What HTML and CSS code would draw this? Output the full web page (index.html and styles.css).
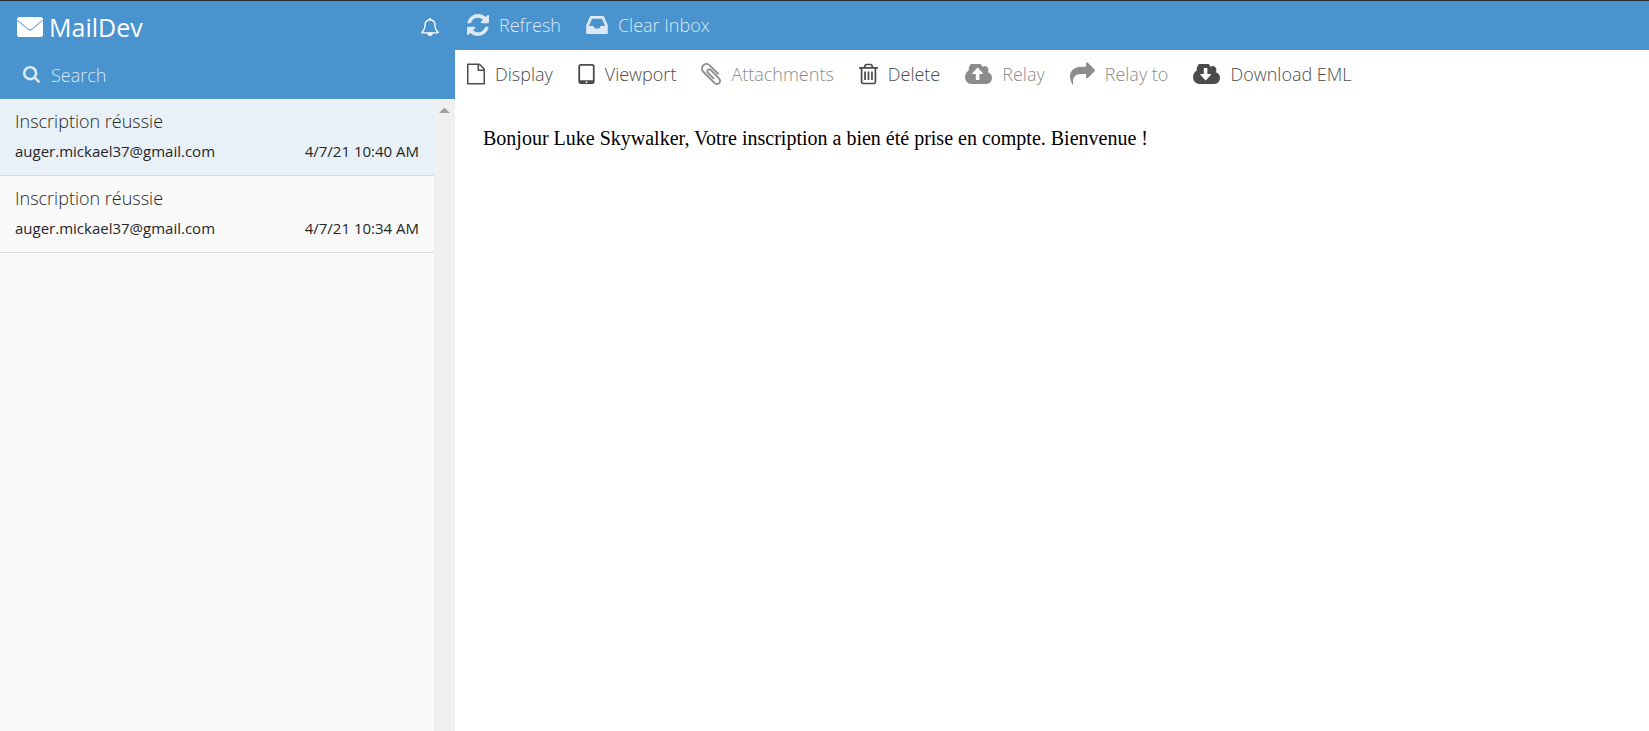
FILE: index.html
```html
<!DOCTYPE html>
<html lang="en">
<head>
<meta charset="utf-8">
<title>MailDev</title>
<link rel="stylesheet" href="styles.css">
</head>
<body>
<div class="app">
  <aside class="sidebar">
    <header class="brand-area">
      <div class="brand-row">
        <h1 class="brand">
          <svg class="icon-envelope" viewBox="0 0 26 20" aria-hidden="true"><rect width="26" height="20" rx="2.5" fill="currentColor"/><path class="envelope-fold" d="M.3 3.2 11 12.2Q13 13.8 15 12.2L25.7 3.2"/></svg>
          <span>MailDev</span>
        </h1>
        <button class="bell" type="button" aria-label="Notifications">
          <svg class="icon-bell" viewBox="64 0 1664 1792" preserveAspectRatio="none" aria-hidden="true"><path d="M246 1408h1300q-266-300-266-832 0-51-24-105t-69-103-121.500-80.500-169.500-31.500-169.500 31.500-121.500 80.500-69 103-24 105q0 532-266 832zm1482 0q0 52-38 90t-90 38h-448q0 106-75 181t-181 75-181-75-75-181h-448q-52 0-90-38t-38-90q50-42 91-88t85-119.500 74.500-158.500 50-206 19.500-260q0-152 117-282.500t307-158.500q-8-19-8-39 0-40 28-68t68-28 68 28 28 68q0 20-8 39 190 28 307 158.500t117 282.500q0 139 19.500 260t50 206 74.500 158.500 85 119.500 91 88z"/></svg>
        </button>
      </div>
      <label class="search">
        <svg class="icon-search" viewBox="64 128 1664 1664" aria-hidden="true"><path d="M1216 832q0-185-131.500-316.500t-316.500-131.500-316.500 131.500-131.500 316.500 131.500 316.500 316.500 131.500 316.500-131.500 131.500-316.500zm512 832q0 52-38 90t-90 38q-54 0-90-38l-343-342q-179 124-399 124-143 0-273.500-55.500t-225-150-150-225-55.500-273.500 55.500-273.500 150-225 225-150 273.500-55.500 273.500 55.500 225 150 150 225 55.500 273.500q0 220-124 399l343 343q37 37 37 90z"/></svg>
        <input class="search-input" type="text" placeholder="Search" aria-label="Search">
      </label>
    </header>
    <div class="mail-pane">
      <ul class="mail-list">
        <li class="mail mail-current">
          <a class="mail-link" href="#mail-2">
            <span class="mail-subject">Inscription réussie</span>
            <span class="mail-meta"><span>auger.mickael37@gmail.com</span><span>4/7/21 10:40 AM</span></span>
          </a>
        </li>
        <li class="mail">
          <a class="mail-link" href="#mail-1">
            <span class="mail-subject">Inscription réussie</span>
            <span class="mail-meta"><span>auger.mickael37@gmail.com</span><span>4/7/21 10:34 AM</span></span>
          </a>
        </li>
      </ul>
      <div class="scroll-track" aria-hidden="true"><span class="scroll-arrow"></span></div>
    </div>
  </aside>
  <main class="content">
    <nav class="bar bar-main">
      <button class="tool" type="button">
        <svg class="icon-refresh" viewBox="128 128 1536 1536" aria-hidden="true"><path d="M1639 1056q0 5-1 7-64 268-268 434.500t-478 166.500q-146 0-282.500-55t-243.500-157l-129 129q-19 19-45 19t-45-19-19-45v-448q0-26 19-45t45-19h448q26 0 45 19t19 45-19 45l-137 137q71 66 161 102t187 36q134 0 250-65t186-179q11-17 53-117 8-23 30-23h192q13 0 22.500 9.500t9.500 22.500zm25-800v448q0 26-19 45t-45 19h-448q-26 0-45-19t-19-45 19-45l138-138q-148-137-349-137-134 0-250 65t-186 179q-11 17-53 117-8 23-30 23h-199q-13 0-22.500-9.500t-9.500-22.500v-7q65-268 270-434.500t480-166.500q146 0 284 55.500t245 156.500l130-129q19-19 45-19t45 19 19 45z"/></svg>
        <span>Refresh</span>
      </button>
      <button class="tool" type="button">
        <svg class="icon-inbox" viewBox="128 256 1536 1280" aria-hidden="true"><path d="M1151 960h316q-1-3-2.500-8t-2.500-8l-212-496h-708l-212 496q-1 2-2.500 8t-2.500 8h316l95 192h320zm513 30v482q0 26-19 45t-45 19h-1408q-26 0-45-19t-19-45v-482q0-62 25-123l238-552q10-25 36.500-42t52.500-17h832q26 0 52.500 17t36.500 42l238 552q25 61 25 123z"/></svg>
        <span>Clear Inbox</span>
      </button>
    </nav>
    <nav class="bar bar-mail">
      <button class="tool" type="button">
        <svg class="icon-file" viewBox="128 0 1536 1792" aria-hidden="true"><path d="M1596 380q28 28 48 76t20 88v1152q0 40-28 68t-68 28h-1344q-40 0-68-28t-28-68v-1600q0-40 28-68t68-28h896q40 0 88 20t76 48zm-444-244v376h376q-10-29-22-41l-313-313q-12-12-41-22zm384 1528v-1024h-416q-40 0-68-28t-28-68v-416h-768v1536h1280z"/></svg>
        <span>Display</span>
      </button>
      <button class="tool" type="button">
        <svg class="icon-tablet" viewBox="320 128 1152 1408" aria-hidden="true"><path d="M960 1408q0-26-19-45t-45-19-45 19-19 45 19 45 45 19 45-19 19-45zm384-160v-960q0-13-9.500-22.500t-22.500-9.500h-832q-13 0-22.500 9.500t-9.500 22.500v960q0 13 9.500 22.500t22.500 9.500h832q13 0 22.500-9.500t9.500-22.500zm128-960v1088q0 66-47 113t-113 47h-832q-66 0-113-47t-47-113v-1088q0-66 47-113t113-47h832q66 0 113 47t47 113z"/></svg>
        <span>Viewport</span>
      </button>
      <button class="tool tool-muted" type="button">
        <svg class="icon-clip" viewBox="196 132 1400 1528" aria-hidden="true"><path d="M1596 1385q0 117-79 196t-196 79q-135 0-235-100l-777-776q-113-115-113-271 0-159 110-270t269-111q158 0 273 113l605 606q10 10 10 22 0 16-30.500 46.500t-46.500 30.500q-13 0-23-10l-606-607q-79-77-181-77-106 0-179 75t-73 181q0 105 76 181l776 777q63 63 145 63 64 0 106-42t42-106q0-82-63-145l-581-581q-26-24-60-24-29 0-48 19t-19 48q0 32 25 59l410 410q10 10 10 22 0 16-31 47t-47 31q-12 0-22-10l-410-410q-63-61-63-149 0-82 57-139t139-57q88 0 149 63l581 581q100 98 100 235z"/></svg>
        <span>Attachments</span>
      </button>
      <button class="tool" type="button">
        <svg class="icon-trash" viewBox="192 128 1408 1536" aria-hidden="true"><path d="M704 736v576q0 14-9 23t-23 9h-64q-14 0-23-9t-9-23v-576q0-14 9-23t23-9h64q14 0 23 9t9 23zm256 0v576q0 14-9 23t-23 9h-64q-14 0-23-9t-9-23v-576q0-14 9-23t23-9h64q14 0 23 9t9 23zm256 0v576q0 14-9 23t-23 9h-64q-14 0-23-9t-9-23v-576q0-14 9-23t23-9h64q14 0 23 9t9 23zm128 724v-948h-896v948q0 22 7 40.500t14.500 27 10.500 8.500h832q3 0 10.500-8.500t14.500-27 7-40.500zm-672-1076h448l-48-117q-7-9-17-11h-317q-10 2-17 11zm928 32v64q0 14-9 23t-23 9h-96v948q0 83-47 143.500t-113 60.500h-832q-66 0-113-58.500t-47-141.500v-952h-96q-14 0-23-9t-9-23v-64q0-14 9-23t23-9h309l70-167q15-37 54-63t79-26h320q40 0 79 26t54 63l70 167h309q14 0 23 9t9 23z"/></svg>
        <span>Delete</span>
      </button>
      <button class="tool tool-muted" type="button">
        <svg class="icon-cloud" viewBox="-128 256 1920 1280" preserveAspectRatio="none" aria-hidden="true"><path d="M1152 864q0-14-9-23l-352-352q-9-9-23-9t-23 9l-351 351q-10 12-10 24 0 14 9 23t23 9h224v352q0 13 9.500 22.500t22.500 9.500h192q13 0 22.500-9.500t9.500-22.500v-352h224q13 0 22.500-9.500t9.500-22.500zm640 288q0 159-112.500 271.500t-271.500 112.500h-1088q-185 0-316.500-131.500t-131.500-316.500q0-130 70-240t188-165q-2-30-2-43 0-212 150-362t362-150q156 0 285.500 87t188.500 231q71-62 166-62 106 0 181 75t75 181q0 76-41 138 130 31 213.500 135.500t83.500 238.500z"/></svg>
        <span>Relay</span>
      </button>
      <button class="tool tool-muted" type="button">
        <svg class="icon-share" viewBox="0 64 1792 1600" aria-hidden="true"><path d="M1792 640q0 26-19 45l-512 512q-19 19-45 19t-45-19-19-45v-256h-224q-98 0-175.500 6t-154 21.500-133 42.500-105.500 69.500-80 101-48.500 138.500-17.500 181q0 55 5 123 0 6 2.500 23.500t2.500 26.500q0 15-8.500 25t-23.500 10q-16 0-28-17-7-9-13-22t-13.500-30-10.500-24q-127-285-127-451 0-199 53-333 162-403 875-403h224v-256q0-26 19-45t45-19 45 19l512 512q19 19 19 45z"/></svg>
        <span>Relay to</span>
      </button>
      <button class="tool" type="button">
        <svg class="icon-cloud" viewBox="-128 256 1920 1280" preserveAspectRatio="none" aria-hidden="true"><path d="M1152 928q0-14-9-23t-23-9h-224v-352q0-13-9.500-22.500t-22.500-9.500h-192q-13 0-22.500 9.500t-9.500 22.500v352h-224q-13 0-22.500 9.500t-9.500 22.500q0 14 9 23l352 352q9 9 23 9t23-9l351-351q10-12 10-24zm640 224q0 159-112.500 271.500t-271.500 112.500h-1088q-185 0-316.500-131.500t-131.500-316.500q0-130 70-240t188-165q-2-30-2-43 0-212 150-362t362-150q156 0 285.500 87t188.500 231q71-62 166-62 106 0 181 75t75 181q0 76-41 138 130 31 213.500 135.500t83.500 238.500z"/></svg>
        <span>Download EML</span>
      </button>
    </nav>
    <article class="message">Bonjour Luke Skywalker, Votre inscription a bien été prise en compte. Bienvenue !</article>
  </main>
</div>
</body>
</html>
```
FILE: styles.css
```css
* {
  box-sizing: border-box;
}

body {
  margin: 0;
  background: #fff;
  color: #262626;
  font-family: "Open Sans", "Noto Sans", sans-serif;
  font-weight: 300;
}

button {
  padding: 0;
  border: 0;
  background: none;
  color: inherit;
  font: inherit;
  cursor: pointer;
}

svg {
  display: block;
  flex: none;
  fill: currentColor;
}

.app {
  display: flex;
  min-height: 100vh;
  border-top: 1px solid #2b2e33;
}

/* Sidebar */
.sidebar {
  display: flex;
  flex: none;
  flex-direction: column;
  width: 455px;
}

.brand-area {
  height: 98px;
  background: #4993cf;
  color: #fff;
}

.brand-row {
  display: flex;
  align-items: center;
  justify-content: space-between;
  height: 52px;
  padding: 0 16px 0 17px;
}

.brand {
  display: flex;
  align-items: center;
  gap: 6px;
  margin: 0;
  font-size: 25px;
  font-weight: 400;
  line-height: 34px;
}

.icon-envelope {
  width: 26px;
  height: 20px;
}

.envelope-fold {
  fill: none;
  stroke: #4993cf;
  stroke-width: 1;
}

.icon-bell {
  width: 18px;
  height: 18px;
}

.search {
  display: flex;
  align-items: center;
  gap: 11px;
  height: 42px;
  padding-left: 23px;
  color: #dbe9f5;
}

.icon-search {
  width: 17px;
  height: 17px;
}

.search-input {
  flex: 1;
  min-width: 0;
  padding: 2px 0 0;
  border: 0;
  outline: 0;
  background: none;
  color: inherit;
  font: inherit;
  font-size: 18px;
  line-height: 24px;
}

.search-input::placeholder {
  color: #dbe9f5;
  opacity: 1;
}

.mail-pane {
  display: flex;
  flex: 1;
  background: #fafafa;
}

.mail-list {
  flex: 1;
  margin: 0;
  padding: 0;
  list-style: none;
}

.mail {
  border-bottom: 1px solid #d9d9d9;
}

.mail-current {
  background: #e9f1f8;
}

.mail-link {
  display: flex;
  flex-direction: column;
  gap: 7px;
  padding: 9px 15px 14px;
  color: inherit;
  text-decoration: none;
}

.mail-subject {
  font-size: 18px;
  line-height: 26px;
}

.mail-meta {
  display: flex;
  justify-content: space-between;
  font-size: 15px;
  font-weight: 400;
  line-height: 20px;
}

.scroll-track {
  width: 21px;
  padding: 9px 5px;
  background: #f0f0f0;
}

.scroll-arrow {
  display: block;
  border: 5px solid transparent;
  border-top: 0;
  border-bottom-color: #a3a3a3;
}

/* Toolbars */
.content {
  flex: 1;
  min-width: 0;
}

.bar {
  display: flex;
  align-items: center;
  gap: 25px;
  height: 49px;
  padding: 0 12px 2px;
}

.bar-main {
  background: #4993cf;
  color: #dbe9f5;
}

.bar-mail {
  color: #4b4b4b;
}

.tool {
  display: flex;
  align-items: center;
  gap: 10px;
  font-size: 18px;
  line-height: 24px;
  white-space: nowrap;
}

.tool-muted {
  color: #8c8c8c;
}

.icon-refresh {
  width: 22px;
  height: 22px;
}

.icon-inbox {
  width: 22px;
  height: 18px;
}

.icon-file {
  width: 18px;
  height: 22px;
}

.icon-tablet {
  width: 17px;
  height: 20px;
}

.icon-clip {
  width: 20px;
  height: 22px;
}

.icon-trash {
  width: 19px;
  height: 22px;
}

.icon-cloud {
  width: 27px;
  height: 20px;
}

.icon-share {
  width: 25px;
  height: 23px;
}

.message {
  padding: 27px 28px;
  color: #000;
  font-family: "Liberation Serif", "Times New Roman", serif;
  font-size: 20px;
  font-weight: 400;
  line-height: 24px;
}
```
